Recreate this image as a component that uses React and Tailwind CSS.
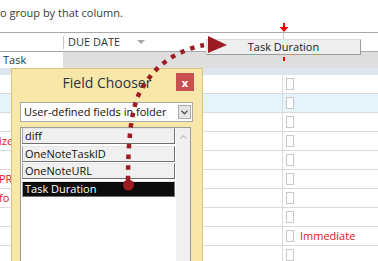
import React from 'react';

const rows = [
  { left: '', bg: '' },
  { left: '', bg: 'bg-[#e5f3fb]' },
  { left: '', bg: '' },
  { left: 'ize', bg: '' },
  { left: '', bg: '' },
  { left: 'PR', bg: '' },
  { left: 'fo', bg: '' },
  { left: '', bg: '' },
  { left: '', bg: '', note: 'Immediate' },
  { left: '', bg: '' },
];

const fields = ['diff', 'OneNoteTaskID', 'OneNoteURL', 'Task Duration'];

const FieldChooser = () => (
  <div className="absolute left-[11px] top-[68px] w-[192px] h-[210px] bg-[#f7e8a9] border border-[#dcc47c]">
    <div className="relative h-[33px] pt-[4px] text-center text-[14px] leading-[19px] text-[#2b3340]">
      Field Chooser
      <div className="absolute left-[164px] top-[4px] w-[18px] h-[18px] bg-[#c75050] flex items-center justify-center text-white text-[11px] font-bold leading-none">
        x
      </div>
    </div>

    <div className="ml-[8px] mr-[9px] h-[20px] flex items-center bg-white border border-[#ababab]">
      <span className="flex-1 pl-[3px] leading-[18px] text-[#111] whitespace-nowrap">User-defined fields in folder</span>
      <div className="w-[13px] h-[14px] mr-[1px] border border-[#adadad] bg-[#e6e6e6] flex items-center justify-center">
        <svg width="7" height="5" viewBox="0 0 7 5">
          <path d="M0.5 0.8 L3.5 3.8 L6.5 0.8" fill="none" stroke="#555" strokeWidth="1.3" />
        </svg>
      </div>
    </div>

    <div className="mt-[5px] ml-[8px] mr-[11px] h-[150px] flex bg-white border border-[#9a9a9a]">
      <div className="flex-1 flex flex-col gap-[1.5px] pl-[1px] pr-[1px]">
        {fields.map((f, i) => {
          const sel = i === fields.length - 1;
          return (
            <div
              key={f}
              className={`h-[16px] pl-[2px] leading-[14px] border border-[#a0a0a0] border-t-[#e6e6e6] border-r-[#707070] border-b-[#707070] whitespace-nowrap ${
                sel ? 'bg-[#0c0c0c] text-white' : 'bg-[#f0f0f0] text-[#111]'
              }`}
            >
              {f}
            </div>
          );
        })}
      </div>
      <div className="w-[14px] bg-[#f0f0f0] flex justify-center pt-[7px]">
        <svg width="7" height="4" viewBox="0 0 7 4">
          <path d="M0.5 3.5 L3.5 0.7 L6.5 3.5" fill="none" stroke="#c2c2c2" strokeWidth="1.2" />
        </svg>
      </div>
    </div>
  </div>
);

export default function App() {
  return (
    <div className="relative w-[378px] h-[261px] overflow-hidden bg-white font-['Open_Sans',sans-serif] text-[11px] text-[#333]">
      <div className="h-[32px] pt-[5px] leading-[15px] text-[#3a3a3a] whitespace-nowrap">o group by that column.</div>

      {/* column headers */}
      <div className="flex h-[20px] border-y border-[#a9a9a9]">
        <div className="w-[63px]" />
        <div className="w-[220px] flex items-center">
          <div className="w-px h-[13px] bg-[#c8c8c8]" />
          <span className="pl-[4px] text-[#333]">DUE DATE</span>
          <span className="ml-[17px] w-0 h-0 border-x-[4px] border-x-transparent border-t-[4px] border-t-[#a8a8a8]" />
        </div>
        <div className="flex-1 flex border-l border-[#c8c8c8]">
          <span className="pl-[6px] mt-[1px] leading-[18px] text-[#333]">CATEGORIES</span>
        </div>
      </div>

      {/* new item row */}
      <div className="flex h-[16px]">
        <div className="w-[63px] bg-white pl-[3px] leading-[16px]">Task</div>
        <div className="flex-1 bg-[#dedede]" />
      </div>
      <div className="h-[7px] bg-[#dfe5ee]" />

      {rows.map((r, i) => (
        <div key={i} className={`flex h-[19px] border-b border-[#dadada] ${r.bg}`}>
          <div className="w-[63px] text-[#e0161e] leading-[18px] -ml-[1px] whitespace-nowrap overflow-hidden">{r.left}</div>
          <div className="w-[220px]" />
          <div className="flex-1 flex items-center border-l border-[#dadada]">
            <div className="ml-[3px] w-[8px] h-[12px] border border-[#c8c8c8] bg-white" />
            {r.note && <span className="ml-[6px] text-[#e0161e]">{r.note}</span>}
          </div>
        </div>
      ))}

      <FieldChooser />

      {/* dragged column header */}
      <div className="absolute left-[206px] top-[39px] w-[155px] h-[16px] bg-[#eeeeee] border border-[#dcdcdc] border-r-[#9c9c9c] border-b-[#9c9c9c] text-center leading-[14px] text-[#1a1a1a]">
        Task Duration
      </div>

      <svg className="absolute inset-0 pointer-events-none" width="378" height="261" viewBox="0 0 378 261">
        <path
          d="M128 180 C128 150 130 110 140 92 C152 70 170 52 204 45"
          fill="none"
          stroke="#9b1d23"
          strokeWidth="4.5"
          strokeDasharray="4.5 6"
        />
        <circle cx="128.5" cy="185" r="5.5" fill="#9b1d23" />
        <polygon points="208,36 227,45 208,53" fill="#9b1d23" />
        <rect x="283" y="23" width="2" height="5" fill="#ff0000" />
        <polygon points="279.5,27 288.5,27 284,32" fill="#ff0000" />
        <rect x="283" y="57" width="2" height="4" fill="#ff0000" />
      </svg>
    </div>
  );
}
